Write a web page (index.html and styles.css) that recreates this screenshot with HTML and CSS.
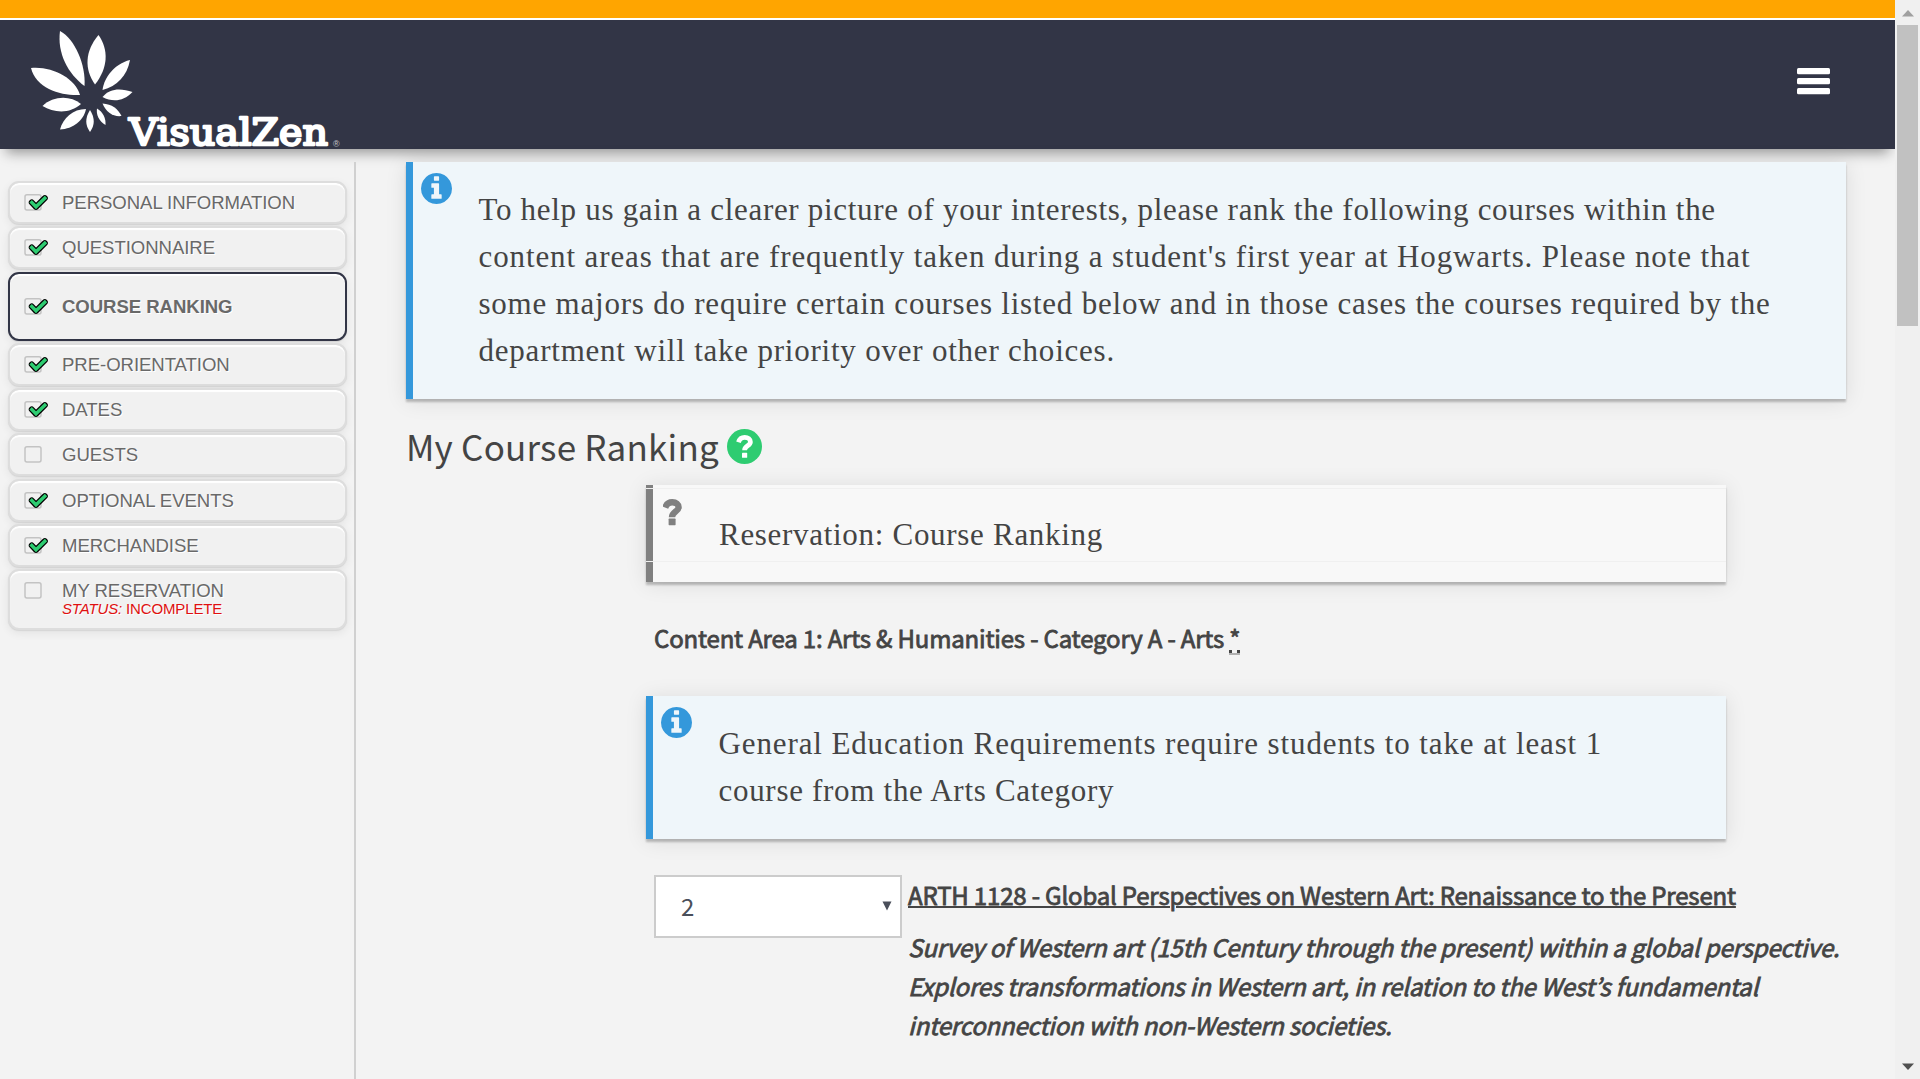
FILE: index.html
```html
<!DOCTYPE html>
<html lang="en">
<head>
<meta charset="utf-8">
<title>VisualZen - Course Ranking</title>
<link rel="stylesheet" href="styles.css">
</head>
<body>
<svg class="defs" width="0" height="0">
  <symbol id="check" viewBox="0 0 24 20">
    <rect x="1" y="1.7" width="16" height="15.4" rx="2" fill="none" stroke="#c3c3c3" stroke-width="1.5"/>
    <path d="M7.8 9.5L12 13.8L20.8 5.2" fill="none" stroke="#000" stroke-width="6" stroke-linecap="round" stroke-linejoin="round"/>
    <path d="M7.8 9.5L12 13.8L20.8 5.2" fill="none" stroke="#2ecc71" stroke-width="3.4" stroke-linecap="square"/>
  </symbol>
  <symbol id="box" viewBox="0 0 24 20">
    <rect x="1" y="1.7" width="16" height="15.4" rx="2" fill="none" stroke="#c3c3c3" stroke-width="1.5"/>
  </symbol>
  <symbol id="info" viewBox="0 0 1536 1536">
    <path fill="#3498db" d="M1024 1248v-160q0-14-9-23t-23-9h-96V544q0-14-9-23t-23-9H544q-14 0-23 9t-9 23v160q0 14 9 23t23 9h96v320h-96q-14 0-23 9t-9 23v160q0 14 9 23t23 9h448q14 0 23-9t9-23zM896 352V192q0-14-9-23t-23-9H672q-14 0-23 9t-9 23v160q0 14 9 23t23 9h192q14 0 23-9t9-23zM1536 768q0 209-103 385.500t-279.500 279.500-385.500 103-385.500-103-279.500-279.500-103-385.500 103-385.500 279.500-279.500 385.500-103 385.500 103 279.500 279.500 103 385.500z"/>
  </symbol>
</svg>
<div class="page">
  <div class="view">
    <header class="topbar">
      <svg class="logo" width="350" height="127" viewBox="0 20 350 127">
        <g fill="#fff">
          <path d="M60 31C75 39 86 65 84.500 86C68 74 57 53 60 31z"/>
          <path d="M98.500 35C109 50 108 68 95 84.500C84 69 85 51 98.500 35z"/>
          <path d="M130 60C127 76 117 86 102.500 90C104 78 114 64 130 60z"/>
          <path d="M132.500 92C123 102 112 102 102.500 97C110 88 121 88 132.500 92z"/>
          <path d="M102.500 103.500C112 104 118 109 121.500 116C113 117 106 112 102.500 103.500z"/>
          <path d="M97 108.500C103 112 106 118 105.500 125C99 121 96 115 97 108.500z"/>
          <path d="M90 110C95 118 95 125 90 132C85 125 85 118 90 110z"/>
          <path d="M86 109C84 120 73 129 60 129.500C63 118 73 109 86 109z"/>
          <path d="M81 104C70 114 54 113 42.500 106C53 96 70 95 81 104z"/>
          <path d="M80 95C62 96 36 89 31 68C52 66 75 78 80 95z"/>
        </g>
        <text class="brand" x="129" y="145" textLength="199" lengthAdjust="spacingAndGlyphs">VisualZen</text>
        <text class="reg" x="333" y="147">®</text>
      </svg>
      <svg class="burger" width="33" height="27" viewBox="0 0 33 27"><g fill="#fff"><rect y="0" width="33" height="6.200" rx="1.500"/><rect y="10" width="33" height="6.200" rx="1.500"/><rect y="20" width="33" height="6.200" rx="1.500"/></g></svg>
    </header>
    <div class="body">
      <nav class="side">
        <a class="step"><svg class="tick"><use href="#check"/></svg><span>PERSONAL INFORMATION</span></a>
        <a class="step"><svg class="tick"><use href="#check"/></svg><span>QUESTIONNAIRE</span></a>
        <a class="step active"><svg class="tick"><use href="#check"/></svg><span>COURSE RANKING</span></a>
        <a class="step"><svg class="tick"><use href="#check"/></svg><span>PRE-ORIENTATION</span></a>
        <a class="step"><svg class="tick"><use href="#check"/></svg><span>DATES</span></a>
        <a class="step"><svg class="tick"><use href="#box"/></svg><span>GUESTS</span></a>
        <a class="step"><svg class="tick"><use href="#check"/></svg><span>OPTIONAL EVENTS</span></a>
        <a class="step"><svg class="tick"><use href="#check"/></svg><span>MERCHANDISE</span></a>
        <a class="step last"><svg class="tick"><use href="#box"/></svg><span>MY RESERVATION<small class="status"><em>STATUS:</em> INCOMPLETE</small></span></a>
      </nav>
      <main class="content">
        <section class="note intro">
          <svg class="badge"><use href="#info"/></svg>
          <p><span class="line">To help us gain a clearer picture of your interests, please rank the following courses within the</span>
          <span class="line loose">content areas that are frequently taken during a student's first year at Hogwarts. Please note that</span>
          <span class="line open">some majors do require certain courses listed below and in those cases the courses required by the</span>
          <span class="line open">department will take priority over other choices.</span></p>
        </section>
        <h1 class="title"><span>My Course Ranking</span>
          <svg class="help" viewBox="0 0 35 35"><circle cx="17.500" cy="17.500" r="17.500" fill="#2ecc71"/><path d="M11.500 13.200C12.500 10 14.800 8.400 17.700 8.400C21 8.400 23.400 10.300 23.400 13C23.400 17 17.600 16.700 17.600 21.200" fill="none" stroke="#fff" stroke-width="4.800"/><rect x="15" y="23.800" width="5.200" height="5" rx=".6" fill="#fff"/></svg>
        </h1>
        <div class="form">
          <section class="note ask">
            <svg class="qmark" width="19" height="27" viewBox="0 0 19 27"><path d="M2.200 8.600C3.500 5 6 3.300 9.300 3.300C13.200 3.300 15.600 5.300 15.600 8.200C15.600 12.600 9 12.600 9 18.200" fill="none" stroke="#808080" stroke-width="6.400"/><rect x="5.600" y="19.600" width="7" height="6.600" rx=".6" fill="#808080"/></svg>
            <p><span class="line">Reservation: Course Ranking</span></p>
          </section>
          <h2 class="area">Content Area 1: Arts &amp; Humanities - Category A - Arts <abbr class="req" title="required">*</abbr></h2>
          <section class="note gen">
            <svg class="badge"><use href="#info"/></svg>
            <p><span class="line loose">General Education Requirements require students to take at least 1</span>
            <span class="line">course from the Arts Category</span></p>
          </section>
          <div class="course">
            <div class="select"><span>2</span><svg width="10" height="10" viewBox="0 0 10 10"><path d="M.5 .5H9.500L5 9.500z" fill="#4a4f5a"/></svg></div>
            <div class="info">
              <h3>ARTH 1128 - Global Perspectives on Western Art: Renaissance to the Present</h3>
              <p><span class="line">Survey of Western art (15th Century through the present) within a global perspective.</span>
              <span class="line">Explores transformations in Western art, in relation to the West’s fundamental</span>
              <span class="line">interconnection with non-Western societies.</span></p>
            </div>
          </div>
        </div>
      </main>
    </div>
  </div>
  <div class="scroll">
    <svg width="12" height="7" viewBox="0 0 12 7"><path d="M0 6.500L6 0L12 6.500z" fill="#a0a0a0"/></svg>
    <div class="thumb"></div>
    <svg class="down" width="12" height="7" viewBox="0 0 12 7"><path d="M0 .5L6 7L12 .5z" fill="#505050"/></svg>
  </div>
</div>
</body>
</html>
```
FILE: styles.css
```css
* { box-sizing: border-box; }
body { margin: 0; background: #f3f3f3; color: #444; font-family: "Noto Sans CJK JP", sans-serif; overflow: hidden; }
.defs { position: absolute; }
h1, h2, h3, p { margin: 0; font-weight: 400; }
.page { display: flex; height: 1079px; }
.view { flex: 1; min-width: 0; }
.topbar { height: 149px; display: flex; justify-content: space-between; padding: 0 65px 0 0; border-top: 18px solid #ffa500; background: linear-gradient(#fff 2px, #323546 2px); box-shadow: 0 10px 12px -6px rgba(0,0,0,.38); }
.logo { display: block; margin-top: 2px; overflow: visible; }
.brand { font: 400 38px "DejaVu Serif", serif; fill: #fff; stroke: #fff; stroke-width: 2.4px; stroke-linejoin: round; }
.reg { font: 9px "Liberation Sans", sans-serif; fill: #c4c5cc; }
.burger { margin-top: 50px; }
.body { display: flex; padding-top: 13px; height: 930px; }
.side { width: 356px; border-right: 2px solid #d0d0d0; padding: 19px 7px 0 8px; font: 18.600px/20px "Liberation Sans", sans-serif; letter-spacing: -.07px; color: #696969; }
.step { display: flex; height: 43px; margin-bottom: 2.300px; padding: 10px 0 0 14px; border: 2px solid #ddd; border-radius: 11px; background: #f1f1f1; box-shadow: inset 0 2px 1px #fff, 0 1px 1px #d5d5d5, 0 3px 10px rgba(0,0,0,.07); text-shadow: 1px 1px 0 #fff; white-space: nowrap; }
.tick { width: 24px; height: 20px; margin-right: 14px; flex: none; }
.step span { display: block; }
.active { height: 69px; padding-top: 23.500px; border-color: #323546; font-weight: 700; }
.last { height: 61px; }
.status { display: block; font-size: 15px; line-height: 16px; letter-spacing: -.15px; color: #e01010; }
.content { flex: 1; padding-left: 50px; }
.note { display: flex; border-left: 7px solid #3498db; background: #eff6fa; box-shadow: 0 3px 2px rgba(0,0,0,.22), 0 2px 20px rgba(0,0,0,.1); font: 31px/47px "Liberation Serif", serif; letter-spacing: .7px; }
.loose { letter-spacing: .88px; }
.open { letter-spacing: .78px; }
.line { display: block; white-space: nowrap; }
.badge { width: 31px; height: 31px; margin: 11px 27px 0 7.500px; flex: none; }
.intro { width: 1440px; height: 237px; }
.note p { padding-top: 24px; }
.title { height: 86px; display: flex; padding: 22px 0 0 0; font-size: 35px; line-height: 50px; letter-spacing: .2px; }
.help { width: 35px; height: 35px; margin: 8px 0 0 8px; }
.form { margin-left: 240px; }
.ask { position: relative; width: 1080px; height: 97px; border-left-color: #808080; background: #f8f8f8; }
.ask::after { content: ""; position: absolute; left: -7px; right: 0; top: 3px; height: 72px; border-top: 1px solid #f0f0f0; border-bottom: 1px solid #f0f0f0; }
.qmark { margin: 14px 37px 0 10px; }
.ask p { padding-top: 26px; }
.area { height: 114px; padding: 36px 0 0 8px; font-size: 24px; line-height: 40px; letter-spacing: -.17px; -webkit-text-stroke: .8px #444; }
.gen { width: 1080px; height: 143px; }
.req { display: inline-block; line-height: 31px; border-bottom: 2px solid #b0b0b0; text-decoration: none; background: linear-gradient(#444, #444) 0 100% / 3px 3px no-repeat, linear-gradient(#444, #444) 100% 100% / 3px 3px no-repeat; }
.course { display: flex; padding: 36px 0 0 8px; }
.select { width: 248px; height: 63px; border: 2px solid #ccc; background: #fff; display: flex; justify-content: space-between; align-items: center; padding: 0 8px 2px 25px; font-size: 24px; color: #4a4f5a; }
.info { padding-left: 6px; font-size: 24px; line-height: 39px; letter-spacing: -.17px; -webkit-text-stroke: .8px #444; }
.info h3 { font-size: 24px; height: 52px; text-decoration: underline; text-decoration-thickness: 2px; }
.info p { font-style: italic; }
.scroll { width: 25px; background: #f0f0f0; display: flex; flex-direction: column; align-items: center; padding: 10px 0 9px; }
.thumb { width: 21px; height: 301px; margin-top: 8px; background: #c1c1c1; }
.down { margin-top: auto; }
```
